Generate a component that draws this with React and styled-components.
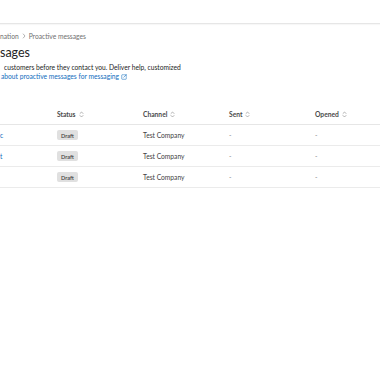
import React from "react";
import styled, { createGlobalStyle } from "styled-components";

const Global = createGlobalStyle`
  html, body { margin: 0; padding: 0; background: #ffffff; }
  body { font-family: Lato, "Open Sans", sans-serif; color: #242424; overflow: hidden; }
  #root { width: 380px; height: 380px; overflow: hidden; }
`;

const Page = styled.div`
  width: 380px;
  height: 380px;
  display: flex;
  flex-direction: column;
  background: #fff;
`;

const TopBar = styled.div`
  height: 23px;
  flex: none;
  border-bottom: 1px solid #e6e6e6;
  box-shadow: 0 1px 1px rgba(0,0,0,0.03);
`;

const Main = styled.div`
  display: flex;
  flex-direction: column;
`;

const Breadcrumb = styled.nav`
  display: flex;
  align-items: center;
  gap: 3px;
  height: 10px;
  margin-top: 7px;
  font-size: 6.7px;
  color: #707070;
`;

const Heading = styled.h1`
  margin: 4px 0 0;
  font-size: 12.5px;
  font-weight: 400;
  line-height: 16px;
  color: #242424;
`;

const Desc = styled.p`
  margin: 2px 0 0;
  padding-left: ${(p) => p.$indent || 0}px;
  font-size: 6.7px;
  line-height: 9px;
  color: #242424;
`;

const LinkLine = styled.a`
  display: flex;
  align-items: center;
  gap: 2px;
  padding-left: 1px;
  font-size: 6.7px;
  line-height: 9px;
  color: #0f6cbd;
  text-decoration: none;
`;

const Table = styled.div`
  margin-top: 23px;
  display: grid;
  grid-template-columns: 53px 86px 86px 86px 86px 1fr;
`;

const Row = styled.div`
  display: contents;
`;

const Cell = styled.div`
  height: 20px;
  display: flex;
  align-items: center;
  gap: 3px;
  padding-left: ${(p) => (p.$first ? 0 : 4)}px;
  border-bottom: 1px solid ${(p) => (p.$head ? "#e6e6e6" : "#ebebeb")};
  font-size: 6.7px;
  font-weight: ${(p) => (p.$head ? 700 : 400)};
  color: ${(p) => (p.$head ? "#4a4a4a" : p.$link ? "#0f6cbd" : p.$muted ? "#8a8a8a" : "#424242")};
  white-space: nowrap;
  overflow: hidden;
`;

const Badge = styled.span`
  display: inline-flex;
  align-items: center;
  justify-content: center;
  height: 10px;
  padding: 0 4px;
  background: #e0e0e0;
  border-radius: 2px;
  font-size: 5.6px;
  font-weight: 600;
  color: #424242;
`;

const Sort = () => (
  <svg width="5" height="7" viewBox="0 0 10 14" fill="none" stroke="#8a8a8a" strokeWidth="1.3" strokeLinecap="round" strokeLinejoin="round">
    <path d="M2 5 L5 2 L8 5" />
    <path d="M2 9 L5 12 L8 9" />
  </svg>
);

const Chevron = () => (
  <svg width="4" height="6" viewBox="0 0 8 12" fill="none" stroke="#8a8a8a" strokeWidth="1.3" strokeLinecap="round" strokeLinejoin="round">
    <path d="M2.5 2 L6 6 L2.5 10" />
  </svg>
);

const External = () => (
  <svg width="6" height="6" viewBox="0 0 12 12" fill="none" stroke="#0f6cbd" strokeWidth="1.1" strokeLinecap="round" strokeLinejoin="round">
    <path d="M5 1.5 H2.5 a1 1 0 0 0 -1 1 V9.5 a1 1 0 0 0 1 1 H9.5 a1 1 0 0 0 1 -1 V7" />
    <path d="M7 1.5 H10.5 V5" />
    <path d="M10.5 1.5 L5.5 6.5" />
  </svg>
);

const rows = [
  { name: "c" },
  { name: "t" },
  { name: "" },
];

export default function App() {
  return (
    <>
      <Global />
      <Page>
        <TopBar />
        <Main>
          <Breadcrumb>
            <span>nation</span>
            <Chevron />
            <span>Proactive messages</span>
          </Breadcrumb>
          <Heading>sages</Heading>
          <Desc $indent={4}>customers before they contact you. Deliver help, customized</Desc>
          <LinkLine href="#">
            about proactive messages for messaging <External />
          </LinkLine>
          <Table>
            <Row>
              <Cell $head $first />
              <Cell $head>Status <Sort /></Cell>
              <Cell $head>Channel <Sort /></Cell>
              <Cell $head>Sent <Sort /></Cell>
              <Cell $head>Opened <Sort /></Cell>
              <Cell $head />
            </Row>
            {rows.map((r, i) => (
              <Row key={i}>
                <Cell $first $link>{r.name}</Cell>
                <Cell><Badge>Draft</Badge></Cell>
                <Cell>Test Company</Cell>
                <Cell $muted>-</Cell>
                <Cell $muted>-</Cell>
                <Cell />
              </Row>
            ))}
          </Table>
        </Main>
      </Page>
    </>
  );
}
